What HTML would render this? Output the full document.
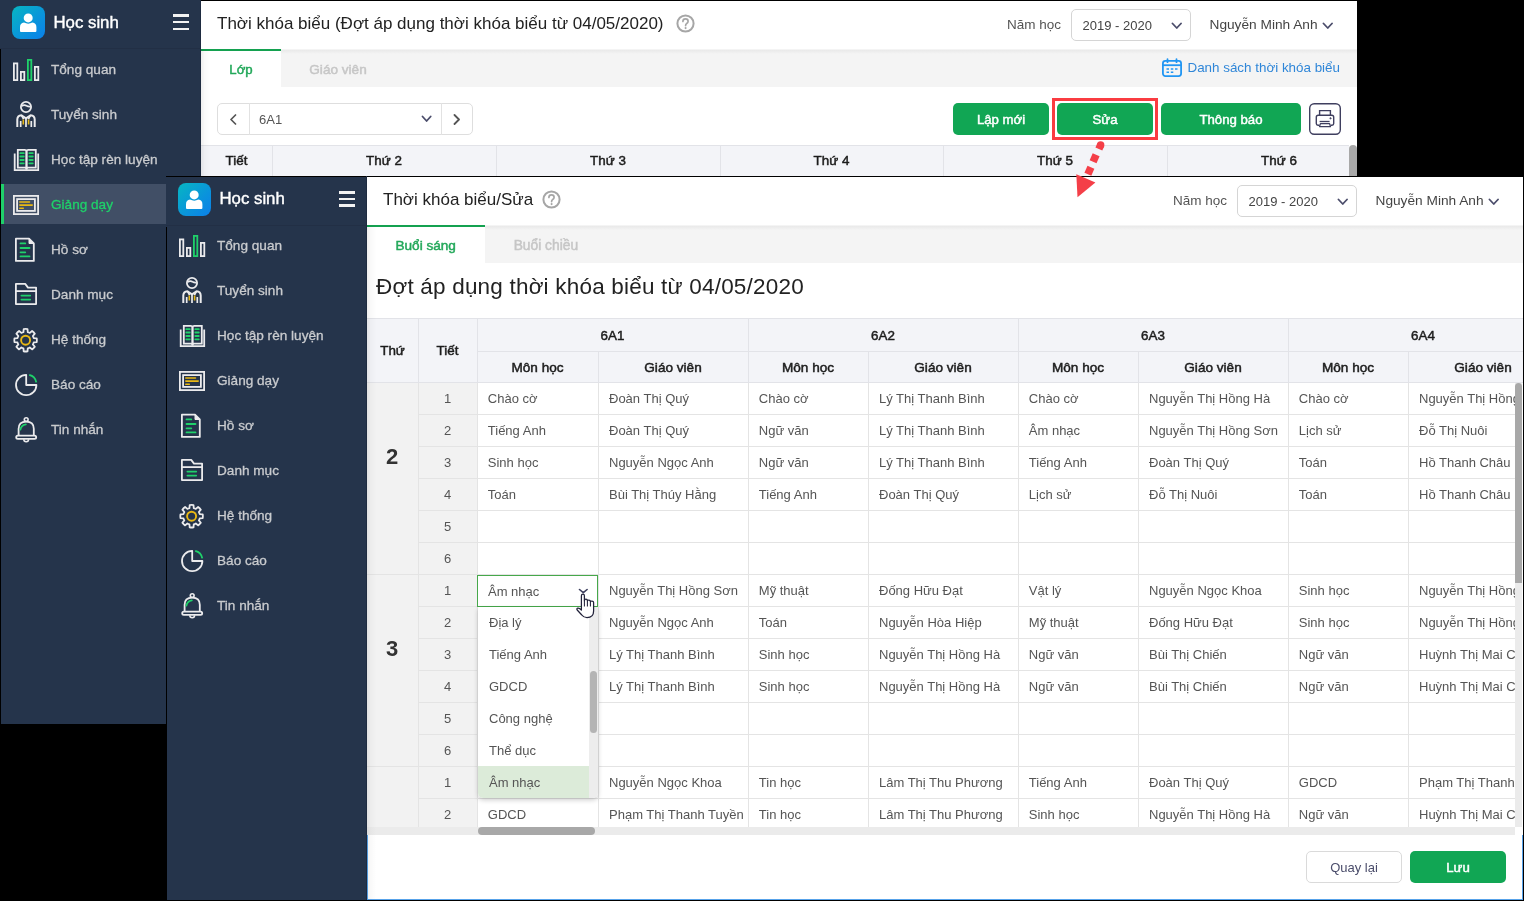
<!DOCTYPE html>
<html><head><meta charset="utf-8"><style>
*{margin:0;padding:0}
html,body{width:1524px;height:901px;overflow:hidden;background:#000;font-family:"Liberation Sans", sans-serif}
.scr{position:absolute;width:1357px;height:724px;overflow:hidden;will-change:transform}
.r{position:absolute}
.t{position:absolute;white-space:nowrap;line-height:1}
</style></head><body>
<div class="scr" style="left:0;top:0"><div class="r" style="left:0px;top:0px;width:201px;height:724px;background:#25344b"></div><div class="r" style="left:0px;top:49px;width:1px;height:675px;background:#000"></div><div class="r" style="left:0px;top:48px;width:201px;height:1px;background:#222f45"></div><div class="r" style="left:12px;top:6px;width:33px;height:33px;border-radius:8px;background:linear-gradient(135deg,#07b6c2 0%,#0a93dc 60%,#0b80ea 100%)"></div><svg class="r" style="left:12px;top:6px" width="33" height="33" viewBox="0 0 33 33"><circle cx="16.2" cy="11.9" r="4.5" fill="#fff"/><path d="M8,25 V21.2 Q8,17.2 12,16.6 Q16.2,18.8 20.4,16.6 Q24.4,17.2 24.4,21.2 V25 Q24.4,26 23.4,26 H9 Q8,26 8,25 Z" fill="#fff"/></svg><div class="t" style="left:53.5px;top:14.78px;font-size:16.8px;color:#fff;font-weight:normal;-webkit-text-stroke:0.4px currentColor">Học sinh</div><div class="r" style="left:173.2px;top:14.3px;width:16px;height:2.6px;background:#f2f2f2"></div><div class="r" style="left:173.2px;top:20.9px;width:16px;height:2.6px;background:#f2f2f2"></div><div class="r" style="left:173.2px;top:27.5px;width:16px;height:2.6px;background:#f2f2f2"></div><svg class="r" style="left:11px;top:55px" width="30" height="30" viewBox="0 0 30 30"><rect x="2.9" y="8.4" width="3.4" height="16.7" fill="none" stroke="#ebebed" stroke-width="1.8"/><rect x="9.9" y="16.9" width="3.4" height="8.2" fill="none" stroke="#ebebed" stroke-width="1.8"/><rect x="16.9" y="4.9" width="3.4" height="20.2" fill="none" stroke="#1fd16a" stroke-width="1.8"/><rect x="23.9" y="11.9" width="3.4" height="13.2" fill="none" stroke="#ebebed" stroke-width="1.8"/></svg><div class="t" style="left:51px;top:62.99px;font-size:13.6px;color:#c9cbce;font-weight:normal;-webkit-text-stroke:0.3px currentColor">Tổng quan</div><svg class="r" style="left:11px;top:100px" width="30" height="30" viewBox="0 0 30 30"><circle cx="15" cy="7" r="5.1" fill="none" stroke="#ebebed" stroke-width="1.8"/><path d="M10.6,6.2 Q13,4.2 15.5,5.8 Q17.5,7 19.6,6.6" fill="none" stroke="#ebebed" stroke-width="1.7"/><path d="M6.3,27 V19.6 Q6.3,15.4 10.4,15.2 L15,18.4 L19.6,15.2 Q23.7,15.4 23.7,19.6 V27" fill="none" stroke="#ebebed" stroke-width="2" stroke-linejoin="round"/><path d="M9.7,21 V27 M20.3,21 V27 M15,18.4 V27 M10.4,15.2 L12.6,19.2 M19.6,15.2 L17.4,19.2" fill="none" stroke="#ebebed" stroke-width="1.7"/><path d="M12.3,19.5 V24.6 M17.6,19.5 V24.6" fill="none" stroke="#e9b815" stroke-width="1.6"/></svg><div class="t" style="left:51px;top:107.99px;font-size:13.6px;color:#c9cbce;font-weight:normal;-webkit-text-stroke:0.3px currentColor">Tuyển sinh</div><svg class="r" style="left:11px;top:145px" width="30" height="30" viewBox="0 0 30 30"><path d="M3.7,8.5 V25.2 H27.2 V8.5" fill="none" stroke="#ebebed" stroke-width="1.8"/><path d="M6.8,4.9 H14 Q15.5,4.9 15.5,6.5 V24.5 Q15.5,22.7 14,22.7 H6.8 Z" fill="none" stroke="#ebebed" stroke-width="1.8"/><path d="M24.8,4.9 H17 Q15.5,4.9 15.5,6.5 V24.5 Q15.5,22.7 17,22.7 H24.8 Z" fill="none" stroke="#ebebed" stroke-width="1.8"/><path d="M9.3,8.2 H12.8 M9.3,11.5 H12.8 M9.3,15 H12.8 M9.3,18.3 H12.8 M18.3,8.2 H21.8 M18.3,11.5 H21.8 M18.3,15 H21.8 M18.3,18.3 H21.8" fill="none" stroke="#1fd16a" stroke-width="1.8" stroke-linecap="round"/></svg><div class="t" style="left:51px;top:152.99px;font-size:13.6px;color:#c9cbce;font-weight:normal;-webkit-text-stroke:0.3px currentColor">Học tập rèn luyện</div><div class="r" style="left:1px;top:184px;width:200px;height:40px;background:#414f66"></div><div class="r" style="left:1px;top:184px;width:3px;height:40px;background:#1fd16a"></div><svg class="r" style="left:11px;top:190px" width="30" height="30" viewBox="0 0 30 30"><rect x="2.9" y="5.9" width="24.2" height="18.2" fill="none" stroke="#ebebed" stroke-width="1.8"/><rect x="6.1" y="9.1" width="17.8" height="11.8" fill="none" stroke="#ebebed" stroke-width="1.8"/><path d="M8.8,12 H18.5 M8.8,15.1 H21.2 M8.8,18.2 H12.3" fill="none" stroke="#e9b815" stroke-width="1.6" stroke-linecap="round"/></svg><div class="t" style="left:51px;top:197.99px;font-size:13.6px;color:#1fd16a;font-weight:normal;-webkit-text-stroke:0.3px currentColor">Giảng dạy</div><svg class="r" style="left:11px;top:235px" width="30" height="30" viewBox="0 0 30 30"><path d="M4.9,3.7 H18 L22.8,8.5 V25.9 H4.9 Z" fill="none" stroke="#ebebed" stroke-width="1.8" stroke-linejoin="round"/><path d="M18,3.7 V8.5 H22.8" fill="#ebebed" stroke="#ebebed" stroke-width="1"/><path d="M9.5,8.4 H14.3 M9.5,13 H18.5 M9.5,17.3 H14.3 M9.5,21.4 H18.5" fill="none" stroke="#1fd16a" stroke-width="1.8" stroke-linecap="round"/></svg><div class="t" style="left:51px;top:242.99px;font-size:13.6px;color:#c9cbce;font-weight:normal;-webkit-text-stroke:0.3px currentColor">Hồ sơ</div><svg class="r" style="left:11px;top:280px" width="30" height="30" viewBox="0 0 30 30"><path d="M4.9,3.9 H14.2 L17,7.6 H25.1 V24.1 H4.9 Z" fill="none" stroke="#ebebed" stroke-width="1.8" stroke-linejoin="round"/><path d="M4.9,11.1 H25.1" fill="none" stroke="#ebebed" stroke-width="1.8"/><path d="M10.4,15.6 H19.2 M10.4,19.6 H19.2" fill="none" stroke="#1fd16a" stroke-width="1.8" stroke-linecap="round"/></svg><div class="t" style="left:51px;top:287.99px;font-size:13.6px;color:#c9cbce;font-weight:normal;-webkit-text-stroke:0.3px currentColor">Danh mục</div><svg class="r" style="left:11px;top:325px" width="30" height="30" viewBox="0 0 30 30"><path d="M12.44,7.08 L12.69,4.06 A11.3,11.3 0 0 1 16.51,4.06 L16.76,7.08 A8.4,8.4 0 0 1 18.81,7.93 L21.12,5.97 A11.3,11.3 0 0 1 23.83,8.68 L21.87,10.99 A8.4,8.4 0 0 1 22.72,13.04 L25.74,13.29 A11.3,11.3 0 0 1 25.74,17.11 L22.72,17.36 A8.4,8.4 0 0 1 21.87,19.41 L23.83,21.72 A11.3,11.3 0 0 1 21.12,24.43 L18.81,22.47 A8.4,8.4 0 0 1 16.76,23.32 L16.51,26.34 A11.3,11.3 0 0 1 12.69,26.34 L12.44,23.32 A8.4,8.4 0 0 1 10.39,22.47 L8.08,24.43 A11.3,11.3 0 0 1 5.37,21.72 L7.33,19.41 A8.4,8.4 0 0 1 6.48,17.36 L3.46,17.11 A11.3,11.3 0 0 1 3.46,13.29 L6.48,13.04 A8.4,8.4 0 0 1 7.33,10.99 L5.37,8.68 A11.3,11.3 0 0 1 8.08,5.97 L10.39,7.93 A8.4,8.4 0 0 1 12.44,7.08 Z" fill="none" stroke="#ebebed" stroke-width="1.8" stroke-linejoin="round"/><circle cx="14.6" cy="15.2" r="4.5" fill="none" stroke="#e9b815" stroke-width="1.9"/></svg><div class="t" style="left:51px;top:332.99px;font-size:13.6px;color:#c9cbce;font-weight:normal;-webkit-text-stroke:0.3px currentColor">Hệ thống</div><svg class="r" style="left:11px;top:370px" width="30" height="30" viewBox="0 0 30 30"><path d="M15.2,4.8 A10.2,10.2 0 1 0 25.4,15 H15.2 Z" fill="none" stroke="#ebebed" stroke-width="1.8" stroke-linejoin="round"/><path d="M18.2,4.9 A9.5,9.5 0 0 1 25.3,12.4" fill="none" stroke="#1fd16a" stroke-width="1.8"/></svg><div class="t" style="left:51px;top:377.99px;font-size:13.6px;color:#c9cbce;font-weight:normal;-webkit-text-stroke:0.3px currentColor">Báo cáo</div><svg class="r" style="left:11px;top:415px" width="30" height="30" viewBox="0 0 30 30"><circle cx="15.2" cy="4.6" r="1.9" fill="none" stroke="#ebebed" stroke-width="1.6"/><path d="M7.6,20.3 V13.8 Q7.6,6.6 15.2,6.6 Q22.8,6.6 22.8,13.8 V20.3" fill="none" stroke="#ebebed" stroke-width="1.8"/><rect x="5.2" y="20.6" width="20" height="3.3" rx="1.6" fill="none" stroke="#ebebed" stroke-width="1.8"/><path d="M12.8,24.3 Q12.8,26.8 15.2,26.8 Q17.6,26.8 17.6,24.3" fill="none" stroke="#ebebed" stroke-width="1.5"/><path d="M9.4,14.6 Q10.2,10.2 14.8,9.3" fill="none" stroke="#1fd16a" stroke-width="1.8" stroke-linecap="round"/></svg><div class="t" style="left:51px;top:422.99px;font-size:13.6px;color:#c9cbce;font-weight:normal;-webkit-text-stroke:0.3px currentColor">Tin nhắn</div><div class="r" style="left:201px;top:0px;width:1156px;height:1px;background:#000"></div><div class="r" style="left:201px;top:1px;width:1156px;height:48px;background:#fff"></div><div class="t" style="left:217px;top:14.61px;font-size:17px;color:#222;font-weight:normal;">Thời khóa biểu (Đợt áp dụng thời khóa biểu từ 04/05/2020)</div><svg class="r" style="left:676px;top:14px" width="19" height="19" viewBox="0 0 19 19"><circle cx="9.5" cy="9.5" r="8.1" fill="none" stroke="#a6a6a6" stroke-width="2"/><path d="M6.9,7.4 Q6.9,4.9 9.5,4.9 Q12.1,4.9 12.1,7.3 Q12.1,8.7 10.7,9.5 Q9.6,10.1 9.6,11.6" fill="none" stroke="#a6a6a6" stroke-width="1.7" stroke-linecap="round"/><circle cx="9.6" cy="14.1" r="1.05" fill="#a6a6a6"/></svg><div class="t" style="left:1007px;top:18.47px;font-size:13.5px;color:#555;font-weight:normal;">Năm học</div><div class="r" style="left:1071px;top:9px;width:120px;height:32px;box-sizing:border-box;border:1px solid #d5d5d5;border-radius:5px;background:#fff"></div><div class="t" style="left:1082.5px;top:18.90px;font-size:13px;color:#444;font-weight:normal;">2019 - 2020</div><svg class="r" style="left:1170.5px;top:21.5px" width="11.5" height="7.5" viewBox="-1 -1 11.5 7.5"><path d="M0.5,0.5 L4.75,5.0 L9.0,0.5" fill="none" stroke="#4b4d6b" stroke-width="1.8" stroke-linecap="round" stroke-linejoin="round"/></svg><div class="t" style="left:1209.5px;top:17.90px;font-size:13.7px;color:#444;font-weight:normal;">Nguyễn Minh Anh</div><svg class="r" style="left:1322px;top:21.5px" width="11.5" height="7.5" viewBox="-1 -1 11.5 7.5"><path d="M0.5,0.5 L4.75,5.0 L9.0,0.5" fill="none" stroke="#4b4d6b" stroke-width="1.8" stroke-linecap="round" stroke-linejoin="round"/></svg><div class="r" style="left:201px;top:49px;width:1156px;height:38px;background:#f4f4f4"></div><div class="r" style="left:201px;top:50px;width:1156px;height:4px;background:linear-gradient(#e9e9e9,#f4f4f4)"></div><div class="r" style="left:201px;top:49px;width:80px;height:38px;background:#fff"></div><div class="r" style="left:201px;top:49px;width:80px;height:2px;background:#14a150"></div><div class="t" style="left:191.00px;width:100px;text-align:center;top:63.33px;font-size:13.2px;color:#23a85a;font-weight:normal;;-webkit-text-stroke:0.46px currentColor">Lớp</div><div class="t" style="left:278.00px;width:120px;text-align:center;top:62.99px;font-size:13.6px;color:#c6c6c6;font-weight:normal;;-webkit-text-stroke:0.48px currentColor">Giáo viên</div><svg class="r" style="left:1161px;top:58px" width="22" height="20" viewBox="0 0 22 20"><rect x="1.9" y="2.9" width="18.2" height="15.2" rx="2.5" fill="none" stroke="#2196f3" stroke-width="1.8"/><path d="M1.9,7.2 H20.1" stroke="#2196f3" stroke-width="1.8"/><path d="M6.5,1.2 V4.2 M15.5,1.2 V4.2" stroke="#2196f3" stroke-width="1.8" stroke-linecap="round"/><path d="M5.5,11 H8 M9.8,11 H12.3 M14,11 H16.5 M5.5,14.2 H8 M9.8,14.2 H12.3" stroke="#2196f3" stroke-width="1.6"/></svg><div class="t" style="left:1187.5px;top:61.36px;font-size:13.4px;color:#2f86d8;font-weight:normal;">Danh sách thời khóa biểu</div><div class="r" style="left:201px;top:87px;width:1156px;height:637px;background:#fff"></div><div class="r" style="left:217px;top:103px;width:256px;height:32px;box-sizing:border-box;border:1px solid #dedede;border-radius:5px;background:#fff"></div><div class="r" style="left:249px;top:103px;width:1px;height:32px;background:#e2e2e2"></div><div class="r" style="left:441px;top:103px;width:1px;height:32px;background:#e2e2e2"></div><div class="t" style="left:259px;top:112.90px;font-size:13px;color:#555;font-weight:normal;">6A1</div><svg class="r" style="left:421.3px;top:115.2px" width="11.2" height="7.5" viewBox="-1 -1 11.2 7.5"><path d="M0.5,0.5 L4.6,5.0 L8.7,0.5" fill="none" stroke="#4b4d6b" stroke-width="1.8" stroke-linecap="round" stroke-linejoin="round"/></svg><svg class="r" style="left:453px;top:114px" width="8" height="11" viewBox="0 0 8 11"><path d="M1.5,1 L6,5.5 L1.5,10" fill="none" stroke="#555" stroke-width="1.8" stroke-linecap="round" stroke-linejoin="round"/></svg><svg class="r" style="left:228.8px;top:114px" width="8" height="11" viewBox="0 0 8 11"><path d="M6.5,1 L2,5.5 L6.5,10" fill="none" stroke="#555" stroke-width="1.7" stroke-linecap="round" stroke-linejoin="round"/></svg><div class="r" style="left:953px;top:103px;width:96px;height:32px;background:#11a654;border-radius:5px"></div><div class="t" style="left:901.00px;width:200px;text-align:center;top:112.83px;font-size:13.2px;color:#fff;font-weight:normal;;-webkit-text-stroke:0.46px currentColor">Lập mới</div><div class="r" style="left:1057px;top:103px;width:96px;height:32px;background:#11a654;border-radius:5px"></div><div class="t" style="left:1005.00px;width:200px;text-align:center;top:112.83px;font-size:13.2px;color:#fff;font-weight:normal;;-webkit-text-stroke:0.46px currentColor">Sửa</div><div class="r" style="left:1161px;top:103px;width:140px;height:32px;background:#11a654;border-radius:5px"></div><div class="t" style="left:1131.00px;width:200px;text-align:center;top:112.83px;font-size:13.2px;color:#fff;font-weight:normal;;-webkit-text-stroke:0.46px currentColor">Thông báo</div><svg class="r" style="left:1309px;top:103px" width="32" height="32" viewBox="0 0 32 32"><rect x="0.7" y="0.7" width="30.6" height="30.6" rx="4.5" fill="#fff" stroke="#3f3f5f" stroke-width="1.4"/><path d="M10.6,12.3 V7.6 H21.4 V12.3" fill="none" stroke="#3f3f5f" stroke-width="1.4"/><path d="M10.3,22.3 H9 Q7.3,22.3 7.3,20.6 V14.2 Q7.3,12.3 9.2,12.3 H22.8 Q24.7,12.3 24.7,14.2 V20.6 Q24.7,22.3 23,22.3 H21.7" fill="none" stroke="#3f3f5f" stroke-width="1.4"/><path d="M10.6,18.5 H20.6" fill="none" stroke="#3f3f5f" stroke-width="1.3"/><path d="M11.4,20.6 H20.6 L21.5,23.6 H10.5 Z" fill="none" stroke="#3f3f5f" stroke-width="1.3" stroke-linejoin="round"/><path d="M21.5,14.4 L22.4,15.3 L21.5,16.2 L20.6,15.3 Z" fill="#3f3f5f" stroke="#3f3f5f" stroke-width="0.6"/></svg><div class="r" style="left:201px;top:145px;width:1148px;height:31px;background:#f3f4f8;border-top:1px solid #e2e3e8;box-sizing:border-box"></div><div class="r" style="left:272px;top:145px;width:1px;height:31px;background:#e2e3e8"></div><div class="r" style="left:496px;top:145px;width:1px;height:31px;background:#e2e3e8"></div><div class="r" style="left:720px;top:145px;width:1px;height:31px;background:#e2e3e8"></div><div class="r" style="left:943px;top:145px;width:1px;height:31px;background:#e2e3e8"></div><div class="r" style="left:1167px;top:145px;width:1px;height:31px;background:#e2e3e8"></div><div class="t" style="left:201.50px;width:70px;text-align:center;top:154.06px;font-size:13.4px;color:#1c1c1c;font-weight:normal;;-webkit-text-stroke:0.47px currentColor">Tiết</div><div class="t" style="left:284.00px;width:200px;text-align:center;top:154.06px;font-size:13.4px;color:#1c1c1c;font-weight:normal;;-webkit-text-stroke:0.47px currentColor">Thứ 2</div><div class="t" style="left:508.00px;width:200px;text-align:center;top:154.06px;font-size:13.4px;color:#1c1c1c;font-weight:normal;;-webkit-text-stroke:0.47px currentColor">Thứ 3</div><div class="t" style="left:731.50px;width:200px;text-align:center;top:154.06px;font-size:13.4px;color:#1c1c1c;font-weight:normal;;-webkit-text-stroke:0.47px currentColor">Thứ 4</div><div class="t" style="left:955.00px;width:200px;text-align:center;top:154.06px;font-size:13.4px;color:#1c1c1c;font-weight:normal;;-webkit-text-stroke:0.47px currentColor">Thứ 5</div><div class="t" style="left:1179.00px;width:200px;text-align:center;top:154.06px;font-size:13.4px;color:#1c1c1c;font-weight:normal;;-webkit-text-stroke:0.47px currentColor">Thứ 6</div><div class="r" style="left:1349px;top:145px;width:8px;height:31px;background:#a8a8a8;border-radius:4px 4px 0 0"></div><div class="r" style="left:200px;top:0px;width:1px;height:724px;background:#1e2b40"></div><div class="r" style="left:201px;top:49px;width:9px;height:675px;background:linear-gradient(to right,rgba(0,0,0,0.07),rgba(0,0,0,0.025) 40%,rgba(0,0,0,0))"></div></div>
<div class="scr" style="left:166px;top:176px"><div class="r" style="left:0px;top:0px;width:201px;height:724px;background:#25344b"></div><div class="r" style="left:0px;top:51px;width:1px;height:675px;background:#000"></div><div class="r" style="left:0px;top:0px;width:201px;height:1px;background:#000"></div><div class="r" style="left:0px;top:49px;width:201px;height:1px;background:#222f45"></div><div class="r" style="left:12px;top:7px;width:33px;height:33px;border-radius:8px;background:linear-gradient(135deg,#07b6c2 0%,#0a93dc 60%,#0b80ea 100%)"></div><svg class="r" style="left:12px;top:7px" width="33" height="33" viewBox="0 0 33 33"><circle cx="16.2" cy="11.9" r="4.5" fill="#fff"/><path d="M8,25 V21.2 Q8,17.2 12,16.6 Q16.2,18.8 20.4,16.6 Q24.4,17.2 24.4,21.2 V25 Q24.4,26 23.4,26 H9 Q8,26 8,25 Z" fill="#fff"/></svg><div class="t" style="left:53.5px;top:14.78px;font-size:16.8px;color:#fff;font-weight:normal;-webkit-text-stroke:0.4px currentColor">Học sinh</div><div class="r" style="left:173.2px;top:15.100000000000001px;width:16px;height:2.6px;background:#f2f2f2"></div><div class="r" style="left:173.2px;top:21.7px;width:16px;height:2.6px;background:#f2f2f2"></div><div class="r" style="left:173.2px;top:28.3px;width:16px;height:2.6px;background:#f2f2f2"></div><svg class="r" style="left:11px;top:55px" width="30" height="30" viewBox="0 0 30 30"><rect x="2.9" y="8.4" width="3.4" height="16.7" fill="none" stroke="#ebebed" stroke-width="1.8"/><rect x="9.9" y="16.9" width="3.4" height="8.2" fill="none" stroke="#ebebed" stroke-width="1.8"/><rect x="16.9" y="4.9" width="3.4" height="20.2" fill="none" stroke="#1fd16a" stroke-width="1.8"/><rect x="23.9" y="11.9" width="3.4" height="13.2" fill="none" stroke="#ebebed" stroke-width="1.8"/></svg><div class="t" style="left:51px;top:62.99px;font-size:13.6px;color:#c9cbce;font-weight:normal;-webkit-text-stroke:0.3px currentColor">Tổng quan</div><svg class="r" style="left:11px;top:100px" width="30" height="30" viewBox="0 0 30 30"><circle cx="15" cy="7" r="5.1" fill="none" stroke="#ebebed" stroke-width="1.8"/><path d="M10.6,6.2 Q13,4.2 15.5,5.8 Q17.5,7 19.6,6.6" fill="none" stroke="#ebebed" stroke-width="1.7"/><path d="M6.3,27 V19.6 Q6.3,15.4 10.4,15.2 L15,18.4 L19.6,15.2 Q23.7,15.4 23.7,19.6 V27" fill="none" stroke="#ebebed" stroke-width="2" stroke-linejoin="round"/><path d="M9.7,21 V27 M20.3,21 V27 M15,18.4 V27 M10.4,15.2 L12.6,19.2 M19.6,15.2 L17.4,19.2" fill="none" stroke="#ebebed" stroke-width="1.7"/><path d="M12.3,19.5 V24.6 M17.6,19.5 V24.6" fill="none" stroke="#e9b815" stroke-width="1.6"/></svg><div class="t" style="left:51px;top:107.99px;font-size:13.6px;color:#c9cbce;font-weight:normal;-webkit-text-stroke:0.3px currentColor">Tuyển sinh</div><svg class="r" style="left:11px;top:145px" width="30" height="30" viewBox="0 0 30 30"><path d="M3.7,8.5 V25.2 H27.2 V8.5" fill="none" stroke="#ebebed" stroke-width="1.8"/><path d="M6.8,4.9 H14 Q15.5,4.9 15.5,6.5 V24.5 Q15.5,22.7 14,22.7 H6.8 Z" fill="none" stroke="#ebebed" stroke-width="1.8"/><path d="M24.8,4.9 H17 Q15.5,4.9 15.5,6.5 V24.5 Q15.5,22.7 17,22.7 H24.8 Z" fill="none" stroke="#ebebed" stroke-width="1.8"/><path d="M9.3,8.2 H12.8 M9.3,11.5 H12.8 M9.3,15 H12.8 M9.3,18.3 H12.8 M18.3,8.2 H21.8 M18.3,11.5 H21.8 M18.3,15 H21.8 M18.3,18.3 H21.8" fill="none" stroke="#1fd16a" stroke-width="1.8" stroke-linecap="round"/></svg><div class="t" style="left:51px;top:152.99px;font-size:13.6px;color:#c9cbce;font-weight:normal;-webkit-text-stroke:0.3px currentColor">Học tập rèn luyện</div><svg class="r" style="left:11px;top:190px" width="30" height="30" viewBox="0 0 30 30"><rect x="2.9" y="5.9" width="24.2" height="18.2" fill="none" stroke="#ebebed" stroke-width="1.8"/><rect x="6.1" y="9.1" width="17.8" height="11.8" fill="none" stroke="#ebebed" stroke-width="1.8"/><path d="M8.8,12 H18.5 M8.8,15.1 H21.2 M8.8,18.2 H12.3" fill="none" stroke="#e9b815" stroke-width="1.6" stroke-linecap="round"/></svg><div class="t" style="left:51px;top:197.99px;font-size:13.6px;color:#c9cbce;font-weight:normal;-webkit-text-stroke:0.3px currentColor">Giảng dạy</div><svg class="r" style="left:11px;top:235px" width="30" height="30" viewBox="0 0 30 30"><path d="M4.9,3.7 H18 L22.8,8.5 V25.9 H4.9 Z" fill="none" stroke="#ebebed" stroke-width="1.8" stroke-linejoin="round"/><path d="M18,3.7 V8.5 H22.8" fill="#ebebed" stroke="#ebebed" stroke-width="1"/><path d="M9.5,8.4 H14.3 M9.5,13 H18.5 M9.5,17.3 H14.3 M9.5,21.4 H18.5" fill="none" stroke="#1fd16a" stroke-width="1.8" stroke-linecap="round"/></svg><div class="t" style="left:51px;top:242.99px;font-size:13.6px;color:#c9cbce;font-weight:normal;-webkit-text-stroke:0.3px currentColor">Hồ sơ</div><svg class="r" style="left:11px;top:280px" width="30" height="30" viewBox="0 0 30 30"><path d="M4.9,3.9 H14.2 L17,7.6 H25.1 V24.1 H4.9 Z" fill="none" stroke="#ebebed" stroke-width="1.8" stroke-linejoin="round"/><path d="M4.9,11.1 H25.1" fill="none" stroke="#ebebed" stroke-width="1.8"/><path d="M10.4,15.6 H19.2 M10.4,19.6 H19.2" fill="none" stroke="#1fd16a" stroke-width="1.8" stroke-linecap="round"/></svg><div class="t" style="left:51px;top:287.99px;font-size:13.6px;color:#c9cbce;font-weight:normal;-webkit-text-stroke:0.3px currentColor">Danh mục</div><svg class="r" style="left:11px;top:325px" width="30" height="30" viewBox="0 0 30 30"><path d="M12.44,7.08 L12.69,4.06 A11.3,11.3 0 0 1 16.51,4.06 L16.76,7.08 A8.4,8.4 0 0 1 18.81,7.93 L21.12,5.97 A11.3,11.3 0 0 1 23.83,8.68 L21.87,10.99 A8.4,8.4 0 0 1 22.72,13.04 L25.74,13.29 A11.3,11.3 0 0 1 25.74,17.11 L22.72,17.36 A8.4,8.4 0 0 1 21.87,19.41 L23.83,21.72 A11.3,11.3 0 0 1 21.12,24.43 L18.81,22.47 A8.4,8.4 0 0 1 16.76,23.32 L16.51,26.34 A11.3,11.3 0 0 1 12.69,26.34 L12.44,23.32 A8.4,8.4 0 0 1 10.39,22.47 L8.08,24.43 A11.3,11.3 0 0 1 5.37,21.72 L7.33,19.41 A8.4,8.4 0 0 1 6.48,17.36 L3.46,17.11 A11.3,11.3 0 0 1 3.46,13.29 L6.48,13.04 A8.4,8.4 0 0 1 7.33,10.99 L5.37,8.68 A11.3,11.3 0 0 1 8.08,5.97 L10.39,7.93 A8.4,8.4 0 0 1 12.44,7.08 Z" fill="none" stroke="#ebebed" stroke-width="1.8" stroke-linejoin="round"/><circle cx="14.6" cy="15.2" r="4.5" fill="none" stroke="#e9b815" stroke-width="1.9"/></svg><div class="t" style="left:51px;top:332.99px;font-size:13.6px;color:#c9cbce;font-weight:normal;-webkit-text-stroke:0.3px currentColor">Hệ thống</div><svg class="r" style="left:11px;top:370px" width="30" height="30" viewBox="0 0 30 30"><path d="M15.2,4.8 A10.2,10.2 0 1 0 25.4,15 H15.2 Z" fill="none" stroke="#ebebed" stroke-width="1.8" stroke-linejoin="round"/><path d="M18.2,4.9 A9.5,9.5 0 0 1 25.3,12.4" fill="none" stroke="#1fd16a" stroke-width="1.8"/></svg><div class="t" style="left:51px;top:377.99px;font-size:13.6px;color:#c9cbce;font-weight:normal;-webkit-text-stroke:0.3px currentColor">Báo cáo</div><svg class="r" style="left:11px;top:415px" width="30" height="30" viewBox="0 0 30 30"><circle cx="15.2" cy="4.6" r="1.9" fill="none" stroke="#ebebed" stroke-width="1.6"/><path d="M7.6,20.3 V13.8 Q7.6,6.6 15.2,6.6 Q22.8,6.6 22.8,13.8 V20.3" fill="none" stroke="#ebebed" stroke-width="1.8"/><rect x="5.2" y="20.6" width="20" height="3.3" rx="1.6" fill="none" stroke="#ebebed" stroke-width="1.8"/><path d="M12.8,24.3 Q12.8,26.8 15.2,26.8 Q17.6,26.8 17.6,24.3" fill="none" stroke="#ebebed" stroke-width="1.5"/><path d="M9.4,14.6 Q10.2,10.2 14.8,9.3" fill="none" stroke="#1fd16a" stroke-width="1.8" stroke-linecap="round"/></svg><div class="t" style="left:51px;top:422.99px;font-size:13.6px;color:#c9cbce;font-weight:normal;-webkit-text-stroke:0.3px currentColor">Tin nhắn</div><div class="r" style="left:201px;top:0px;width:1156px;height:1px;background:#000"></div><div class="r" style="left:201px;top:1px;width:1156px;height:48px;background:#fff"></div><div class="t" style="left:217px;top:14.61px;font-size:17px;color:#222;font-weight:normal;">Thời khóa biểu/Sửa</div><svg class="r" style="left:375.5px;top:14px" width="19" height="19" viewBox="0 0 19 19"><circle cx="9.5" cy="9.5" r="8.1" fill="none" stroke="#a6a6a6" stroke-width="2"/><path d="M6.9,7.4 Q6.9,4.9 9.5,4.9 Q12.1,4.9 12.1,7.3 Q12.1,8.7 10.7,9.5 Q9.6,10.1 9.6,11.6" fill="none" stroke="#a6a6a6" stroke-width="1.7" stroke-linecap="round"/><circle cx="9.6" cy="14.1" r="1.05" fill="#a6a6a6"/></svg><div class="t" style="left:1007px;top:18.47px;font-size:13.5px;color:#555;font-weight:normal;">Năm học</div><div class="r" style="left:1071px;top:9px;width:120px;height:32px;box-sizing:border-box;border:1px solid #d5d5d5;border-radius:5px;background:#fff"></div><div class="t" style="left:1082.5px;top:18.90px;font-size:13px;color:#444;font-weight:normal;">2019 - 2020</div><svg class="r" style="left:1170.5px;top:21.5px" width="11.5" height="7.5" viewBox="-1 -1 11.5 7.5"><path d="M0.5,0.5 L4.75,5.0 L9.0,0.5" fill="none" stroke="#4b4d6b" stroke-width="1.8" stroke-linecap="round" stroke-linejoin="round"/></svg><div class="t" style="left:1209.5px;top:17.90px;font-size:13.7px;color:#444;font-weight:normal;">Nguyễn Minh Anh</div><svg class="r" style="left:1322px;top:21.5px" width="11.5" height="7.5" viewBox="-1 -1 11.5 7.5"><path d="M0.5,0.5 L4.75,5.0 L9.0,0.5" fill="none" stroke="#4b4d6b" stroke-width="1.8" stroke-linecap="round" stroke-linejoin="round"/></svg><div class="r" style="left:201px;top:49px;width:1156px;height:38px;background:#f4f4f4"></div><div class="r" style="left:201px;top:50px;width:1156px;height:4px;background:linear-gradient(#e9e9e9,#f4f4f4)"></div><div class="r" style="left:201px;top:49px;width:118px;height:38px;background:#fff"></div><div class="r" style="left:201px;top:49px;width:118px;height:2px;background:#14a150"></div><div class="t" style="left:189.70px;width:140px;text-align:center;top:62.99px;font-size:13.6px;color:#23a85a;font-weight:normal;;-webkit-text-stroke:0.48px currentColor">Buổi sáng</div><div class="t" style="left:309.90px;width:140px;text-align:center;top:62.82px;font-size:13.8px;color:#c6c6c6;font-weight:normal;;-webkit-text-stroke:0.48px currentColor">Buổi chiều</div><div class="r" style="left:201px;top:87px;width:1156px;height:637px;background:#fff"></div><div class="t" style="left:210px;top:99.65px;font-size:22.5px;color:#222;font-weight:normal;letter-spacing:0.2px">Đợt áp dụng thời khóa biểu từ 04/05/2020</div><div class="r" style="left:201px;top:142px;width:1156px;height:517px;background:#fff"></div><div class="r" style="left:201px;top:142px;width:1156px;height:64px;background:#f3f4f8"></div><div class="r" style="left:201px;top:207px;width:110px;height:444px;background:#f2f2f2"></div><div class="r" style="left:201px;top:142px;width:1156px;height:1px;background:#e2e3e8"></div><div class="r" style="left:311px;top:175px;width:1046px;height:1px;background:#e2e3e8"></div><div class="r" style="left:201px;top:206px;width:1156px;height:1px;background:#e2e3e8"></div><div class="r" style="left:252px;top:142px;width:1px;height:64px;background:#e2e3e8"></div><div class="r" style="left:311px;top:142px;width:1px;height:64px;background:#e2e3e8"></div><div class="r" style="left:582px;top:142px;width:1px;height:64px;background:#e2e3e8"></div><div class="r" style="left:852px;top:142px;width:1px;height:64px;background:#e2e3e8"></div><div class="r" style="left:1122px;top:142px;width:1px;height:64px;background:#e2e3e8"></div><div class="r" style="left:432px;top:175px;width:1px;height:31px;background:#e2e3e8"></div><div class="r" style="left:702px;top:175px;width:1px;height:31px;background:#e2e3e8"></div><div class="r" style="left:972px;top:175px;width:1px;height:31px;background:#e2e3e8"></div><div class="r" style="left:1242px;top:175px;width:1px;height:31px;background:#e2e3e8"></div><div class="t" style="left:201.50px;width:50px;text-align:center;top:168.06px;font-size:13.4px;color:#1c1c1c;font-weight:normal;;-webkit-text-stroke:0.47px currentColor">Thứ</div><div class="t" style="left:252.50px;width:58px;text-align:center;top:168.06px;font-size:13.4px;color:#1c1c1c;font-weight:normal;;-webkit-text-stroke:0.47px currentColor">Tiết</div><div class="t" style="left:346.50px;width:200px;text-align:center;top:153.06px;font-size:13.4px;color:#1c1c1c;font-weight:normal;;-webkit-text-stroke:0.47px currentColor">6A1</div><div class="t" style="left:617.00px;width:200px;text-align:center;top:153.06px;font-size:13.4px;color:#1c1c1c;font-weight:normal;;-webkit-text-stroke:0.47px currentColor">6A2</div><div class="t" style="left:887.00px;width:200px;text-align:center;top:153.06px;font-size:13.4px;color:#1c1c1c;font-weight:normal;;-webkit-text-stroke:0.47px currentColor">6A3</div><div class="t" style="left:1157.00px;width:200px;text-align:center;top:153.06px;font-size:13.4px;color:#1c1c1c;font-weight:normal;;-webkit-text-stroke:0.47px currentColor">6A4</div><div class="t" style="left:271.50px;width:200px;text-align:center;top:184.89px;font-size:13.6px;color:#1c1c1c;font-weight:normal;;-webkit-text-stroke:0.48px currentColor">Môn học</div><div class="t" style="left:407.00px;width:200px;text-align:center;top:184.89px;font-size:13.6px;color:#1c1c1c;font-weight:normal;;-webkit-text-stroke:0.48px currentColor">Giáo viên</div><div class="t" style="left:542.00px;width:200px;text-align:center;top:184.89px;font-size:13.6px;color:#1c1c1c;font-weight:normal;;-webkit-text-stroke:0.48px currentColor">Môn học</div><div class="t" style="left:677.00px;width:200px;text-align:center;top:184.89px;font-size:13.6px;color:#1c1c1c;font-weight:normal;;-webkit-text-stroke:0.48px currentColor">Giáo viên</div><div class="t" style="left:812.00px;width:200px;text-align:center;top:184.89px;font-size:13.6px;color:#1c1c1c;font-weight:normal;;-webkit-text-stroke:0.48px currentColor">Môn học</div><div class="t" style="left:947.00px;width:200px;text-align:center;top:184.89px;font-size:13.6px;color:#1c1c1c;font-weight:normal;;-webkit-text-stroke:0.48px currentColor">Giáo viên</div><div class="t" style="left:1082.00px;width:200px;text-align:center;top:184.89px;font-size:13.6px;color:#1c1c1c;font-weight:normal;;-webkit-text-stroke:0.48px currentColor">Môn học</div><div class="t" style="left:1217.00px;width:200px;text-align:center;top:184.89px;font-size:13.6px;color:#1c1c1c;font-weight:normal;;-webkit-text-stroke:0.48px currentColor">Giáo viên</div><div class="r" style="left:252px;top:238px;width:1098px;height:1px;background:#e4e4e4"></div><div class="r" style="left:252px;top:270px;width:1098px;height:1px;background:#e4e4e4"></div><div class="r" style="left:252px;top:302px;width:1098px;height:1px;background:#e4e4e4"></div><div class="r" style="left:252px;top:334px;width:1098px;height:1px;background:#e4e4e4"></div><div class="r" style="left:252px;top:366px;width:1098px;height:1px;background:#e4e4e4"></div><div class="r" style="left:252px;top:398px;width:1098px;height:1px;background:#e4e4e4"></div><div class="r" style="left:252px;top:430px;width:1098px;height:1px;background:#e4e4e4"></div><div class="r" style="left:252px;top:462px;width:1098px;height:1px;background:#e4e4e4"></div><div class="r" style="left:252px;top:494px;width:1098px;height:1px;background:#e4e4e4"></div><div class="r" style="left:252px;top:526px;width:1098px;height:1px;background:#e4e4e4"></div><div class="r" style="left:252px;top:558px;width:1098px;height:1px;background:#e4e4e4"></div><div class="r" style="left:252px;top:590px;width:1098px;height:1px;background:#e4e4e4"></div><div class="r" style="left:252px;top:622px;width:1098px;height:1px;background:#e4e4e4"></div><div class="r" style="left:201px;top:398px;width:51px;height:1px;background:#e4e4e4"></div><div class="r" style="left:201px;top:590px;width:51px;height:1px;background:#e4e4e4"></div><div class="r" style="left:252px;top:207px;width:1px;height:444px;background:#e4e4e4"></div><div class="r" style="left:311px;top:207px;width:1px;height:444px;background:#e4e4e4"></div><div class="r" style="left:432px;top:207px;width:1px;height:444px;background:#e4e4e4"></div><div class="r" style="left:582px;top:207px;width:1px;height:444px;background:#e4e4e4"></div><div class="r" style="left:702px;top:207px;width:1px;height:444px;background:#e4e4e4"></div><div class="r" style="left:852px;top:207px;width:1px;height:444px;background:#e4e4e4"></div><div class="r" style="left:972px;top:207px;width:1px;height:444px;background:#e4e4e4"></div><div class="r" style="left:1122px;top:207px;width:1px;height:444px;background:#e4e4e4"></div><div class="r" style="left:1242px;top:207px;width:1px;height:444px;background:#e4e4e4"></div><div class="t" style="left:206.00px;width:40px;text-align:center;top:270.18px;font-size:22px;color:#333;font-weight:bold;">2</div><div class="t" style="left:206.00px;width:40px;text-align:center;top:462.18px;font-size:22px;color:#333;font-weight:bold;">3</div><div class="t" style="left:261.50px;width:40px;text-align:center;top:216.30px;font-size:13px;color:#555;font-weight:normal;">1</div><div class="t" style="left:261.50px;width:40px;text-align:center;top:248.30px;font-size:13px;color:#555;font-weight:normal;">2</div><div class="t" style="left:261.50px;width:40px;text-align:center;top:280.30px;font-size:13px;color:#555;font-weight:normal;">3</div><div class="t" style="left:261.50px;width:40px;text-align:center;top:312.30px;font-size:13px;color:#555;font-weight:normal;">4</div><div class="t" style="left:261.50px;width:40px;text-align:center;top:344.30px;font-size:13px;color:#555;font-weight:normal;">5</div><div class="t" style="left:261.50px;width:40px;text-align:center;top:376.30px;font-size:13px;color:#555;font-weight:normal;">6</div><div class="t" style="left:261.50px;width:40px;text-align:center;top:408.30px;font-size:13px;color:#555;font-weight:normal;">1</div><div class="t" style="left:261.50px;width:40px;text-align:center;top:440.30px;font-size:13px;color:#555;font-weight:normal;">2</div><div class="t" style="left:261.50px;width:40px;text-align:center;top:472.30px;font-size:13px;color:#555;font-weight:normal;">3</div><div class="t" style="left:261.50px;width:40px;text-align:center;top:504.30px;font-size:13px;color:#555;font-weight:normal;">4</div><div class="t" style="left:261.50px;width:40px;text-align:center;top:536.30px;font-size:13px;color:#555;font-weight:normal;">5</div><div class="t" style="left:261.50px;width:40px;text-align:center;top:568.30px;font-size:13px;color:#555;font-weight:normal;">6</div><div class="t" style="left:261.50px;width:40px;text-align:center;top:600.30px;font-size:13px;color:#555;font-weight:normal;">1</div><div class="t" style="left:261.50px;width:40px;text-align:center;top:632.30px;font-size:13px;color:#555;font-weight:normal;">2</div><div class="r" style="left:0;top:0;width:1349px;height:724px;overflow:hidden"><div class="t" style="left:321.8px;top:216.40px;font-size:13px;color:#555;font-weight:normal;">Chào cờ</div><div class="t" style="left:443px;top:216.40px;font-size:13px;color:#555;font-weight:normal;">Đoàn Thị Quý</div><div class="t" style="left:592.8px;top:216.40px;font-size:13px;color:#555;font-weight:normal;">Chào cờ</div><div class="t" style="left:713px;top:216.40px;font-size:13px;color:#555;font-weight:normal;">Lý Thị Thanh Bình</div><div class="t" style="left:862.8px;top:216.40px;font-size:13px;color:#555;font-weight:normal;">Chào cờ</div><div class="t" style="left:983px;top:216.40px;font-size:13px;color:#555;font-weight:normal;">Nguyễn Thị Hồng Hà</div><div class="t" style="left:1132.8px;top:216.40px;font-size:13px;color:#555;font-weight:normal;">Chào cờ</div><div class="t" style="left:1253px;top:216.40px;font-size:13px;color:#555;font-weight:normal;">Nguyễn Thị Hồng Hà</div><div class="t" style="left:321.8px;top:248.40px;font-size:13px;color:#555;font-weight:normal;">Tiếng Anh</div><div class="t" style="left:443px;top:248.40px;font-size:13px;color:#555;font-weight:normal;">Đoàn Thị Quý</div><div class="t" style="left:592.8px;top:248.40px;font-size:13px;color:#555;font-weight:normal;">Ngữ văn</div><div class="t" style="left:713px;top:248.40px;font-size:13px;color:#555;font-weight:normal;">Lý Thị Thanh Bình</div><div class="t" style="left:862.8px;top:248.40px;font-size:13px;color:#555;font-weight:normal;">Âm nhạc</div><div class="t" style="left:983px;top:248.40px;font-size:13px;color:#555;font-weight:normal;">Nguyễn Thị Hồng Sơn</div><div class="t" style="left:1132.8px;top:248.40px;font-size:13px;color:#555;font-weight:normal;">Lịch sử</div><div class="t" style="left:1253px;top:248.40px;font-size:13px;color:#555;font-weight:normal;">Đỗ Thị Nuôi</div><div class="t" style="left:321.8px;top:280.40px;font-size:13px;color:#555;font-weight:normal;">Sinh học</div><div class="t" style="left:443px;top:280.40px;font-size:13px;color:#555;font-weight:normal;">Nguyễn Ngọc Anh</div><div class="t" style="left:592.8px;top:280.40px;font-size:13px;color:#555;font-weight:normal;">Ngữ văn</div><div class="t" style="left:713px;top:280.40px;font-size:13px;color:#555;font-weight:normal;">Lý Thị Thanh Bình</div><div class="t" style="left:862.8px;top:280.40px;font-size:13px;color:#555;font-weight:normal;">Tiếng Anh</div><div class="t" style="left:983px;top:280.40px;font-size:13px;color:#555;font-weight:normal;">Đoàn Thị Quý</div><div class="t" style="left:1132.8px;top:280.40px;font-size:13px;color:#555;font-weight:normal;">Toán</div><div class="t" style="left:1253px;top:280.40px;font-size:13px;color:#555;font-weight:normal;">Hồ Thanh Châu</div><div class="t" style="left:321.8px;top:312.40px;font-size:13px;color:#555;font-weight:normal;">Toán</div><div class="t" style="left:443px;top:312.40px;font-size:13px;color:#555;font-weight:normal;">Bùi Thị Thúy Hằng</div><div class="t" style="left:592.8px;top:312.40px;font-size:13px;color:#555;font-weight:normal;">Tiếng Anh</div><div class="t" style="left:713px;top:312.40px;font-size:13px;color:#555;font-weight:normal;">Đoàn Thị Quý</div><div class="t" style="left:862.8px;top:312.40px;font-size:13px;color:#555;font-weight:normal;">Lịch sử</div><div class="t" style="left:983px;top:312.40px;font-size:13px;color:#555;font-weight:normal;">Đỗ Thị Nuôi</div><div class="t" style="left:1132.8px;top:312.40px;font-size:13px;color:#555;font-weight:normal;">Toán</div><div class="t" style="left:1253px;top:312.40px;font-size:13px;color:#555;font-weight:normal;">Hồ Thanh Châu</div><div class="t" style="left:443px;top:408.40px;font-size:13px;color:#555;font-weight:normal;">Nguyễn Thị Hồng Sơn</div><div class="t" style="left:592.8px;top:408.40px;font-size:13px;color:#555;font-weight:normal;">Mỹ thuật</div><div class="t" style="left:713px;top:408.40px;font-size:13px;color:#555;font-weight:normal;">Đống Hữu Đạt</div><div class="t" style="left:862.8px;top:408.40px;font-size:13px;color:#555;font-weight:normal;">Vật lý</div><div class="t" style="left:983px;top:408.40px;font-size:13px;color:#555;font-weight:normal;">Nguyễn Ngọc Khoa</div><div class="t" style="left:1132.8px;top:408.40px;font-size:13px;color:#555;font-weight:normal;">Sinh học</div><div class="t" style="left:1253px;top:408.40px;font-size:13px;color:#555;font-weight:normal;">Nguyễn Thị Hồng Hà</div><div class="t" style="left:443px;top:440.40px;font-size:13px;color:#555;font-weight:normal;">Nguyễn Ngọc Anh</div><div class="t" style="left:592.8px;top:440.40px;font-size:13px;color:#555;font-weight:normal;">Toán</div><div class="t" style="left:713px;top:440.40px;font-size:13px;color:#555;font-weight:normal;">Nguyễn Hòa Hiệp</div><div class="t" style="left:862.8px;top:440.40px;font-size:13px;color:#555;font-weight:normal;">Mỹ thuật</div><div class="t" style="left:983px;top:440.40px;font-size:13px;color:#555;font-weight:normal;">Đống Hữu Đạt</div><div class="t" style="left:1132.8px;top:440.40px;font-size:13px;color:#555;font-weight:normal;">Sinh học</div><div class="t" style="left:1253px;top:440.40px;font-size:13px;color:#555;font-weight:normal;">Nguyễn Thị Hồng Hà</div><div class="t" style="left:443px;top:472.40px;font-size:13px;color:#555;font-weight:normal;">Lý Thị Thanh Bình</div><div class="t" style="left:592.8px;top:472.40px;font-size:13px;color:#555;font-weight:normal;">Sinh học</div><div class="t" style="left:713px;top:472.40px;font-size:13px;color:#555;font-weight:normal;">Nguyễn Thị Hồng Hà</div><div class="t" style="left:862.8px;top:472.40px;font-size:13px;color:#555;font-weight:normal;">Ngữ văn</div><div class="t" style="left:983px;top:472.40px;font-size:13px;color:#555;font-weight:normal;">Bùi Thị Chiến</div><div class="t" style="left:1132.8px;top:472.40px;font-size:13px;color:#555;font-weight:normal;">Ngữ văn</div><div class="t" style="left:1253px;top:472.40px;font-size:13px;color:#555;font-weight:normal;">Huỳnh Thị Mai Chi</div><div class="t" style="left:443px;top:504.40px;font-size:13px;color:#555;font-weight:normal;">Lý Thị Thanh Bình</div><div class="t" style="left:592.8px;top:504.40px;font-size:13px;color:#555;font-weight:normal;">Sinh học</div><div class="t" style="left:713px;top:504.40px;font-size:13px;color:#555;font-weight:normal;">Nguyễn Thị Hồng Hà</div><div class="t" style="left:862.8px;top:504.40px;font-size:13px;color:#555;font-weight:normal;">Ngữ văn</div><div class="t" style="left:983px;top:504.40px;font-size:13px;color:#555;font-weight:normal;">Bùi Thị Chiến</div><div class="t" style="left:1132.8px;top:504.40px;font-size:13px;color:#555;font-weight:normal;">Ngữ văn</div><div class="t" style="left:1253px;top:504.40px;font-size:13px;color:#555;font-weight:normal;">Huỳnh Thị Mai Chi</div><div class="t" style="left:443px;top:600.40px;font-size:13px;color:#555;font-weight:normal;">Nguyễn Ngọc Khoa</div><div class="t" style="left:592.8px;top:600.40px;font-size:13px;color:#555;font-weight:normal;">Tin học</div><div class="t" style="left:713px;top:600.40px;font-size:13px;color:#555;font-weight:normal;">Lâm Thị Thu Phương</div><div class="t" style="left:862.8px;top:600.40px;font-size:13px;color:#555;font-weight:normal;">Tiếng Anh</div><div class="t" style="left:983px;top:600.40px;font-size:13px;color:#555;font-weight:normal;">Đoàn Thị Quý</div><div class="t" style="left:1132.8px;top:600.40px;font-size:13px;color:#555;font-weight:normal;">GDCD</div><div class="t" style="left:1253px;top:600.40px;font-size:13px;color:#555;font-weight:normal;">Phạm Thị Thanh Tuyền</div><div class="t" style="left:321.8px;top:632.40px;font-size:13px;color:#555;font-weight:normal;">GDCD</div><div class="t" style="left:443px;top:632.40px;font-size:13px;color:#555;font-weight:normal;">Phạm Thị Thanh Tuyền</div><div class="t" style="left:592.8px;top:632.40px;font-size:13px;color:#555;font-weight:normal;">Tin học</div><div class="t" style="left:713px;top:632.40px;font-size:13px;color:#555;font-weight:normal;">Lâm Thị Thu Phương</div><div class="t" style="left:862.8px;top:632.40px;font-size:13px;color:#555;font-weight:normal;">Sinh học</div><div class="t" style="left:983px;top:632.40px;font-size:13px;color:#555;font-weight:normal;">Nguyễn Thị Hồng Hà</div><div class="t" style="left:1132.8px;top:632.40px;font-size:13px;color:#555;font-weight:normal;">Ngữ văn</div><div class="t" style="left:1253px;top:632.40px;font-size:13px;color:#555;font-weight:normal;">Huỳnh Thị Mai Chi</div></div><div class="r" style="left:1349px;top:207px;width:7px;height:444px;background:#ebebeb"></div><div class="r" style="left:1349px;top:207px;width:7px;height:200px;background:#a8a8a8;border-radius:4px 4px 0 0"></div><div class="r" style="left:201px;top:651px;width:1148px;height:8px;background:#ebebeb"></div><div class="r" style="left:312px;top:651px;width:117px;height:8px;background:#a8a8a8;border-radius:4px"></div><div class="r" style="left:311px;top:399px;width:121px;height:32px;box-sizing:border-box;border:1px solid #46a84a;background:#fff"></div><div class="t" style="left:322px;top:408.80px;font-size:13px;color:#555;font-weight:normal;">Âm nhạc</div><svg class="r" style="left:411.6px;top:411.6px" width="10.6" height="6.2" viewBox="-1 -1 10.6 6.2"><path d="M0.5,0.5 L4.3,3.7 L8.1,0.5" fill="none" stroke="#3d3f5e" stroke-width="1.6" stroke-linecap="round" stroke-linejoin="round"/></svg><div class="r" style="left:312px;top:431px;width:120px;height:191px;background:#fff;box-shadow:0 2px 5px rgba(0,0,0,0.2);border-radius:0 0 5px 5px;overflow:hidden"></div><div class="r" style="left:312px;top:590px;width:111px;height:32px;background:#dcebd9;border-radius:0 0 0 5px"></div><div class="t" style="left:323px;top:440.30px;font-size:13px;color:#555;font-weight:normal;">Địa lý</div><div class="t" style="left:323px;top:472.30px;font-size:13px;color:#555;font-weight:normal;">Tiếng Anh</div><div class="t" style="left:323px;top:504.30px;font-size:13px;color:#555;font-weight:normal;">GDCD</div><div class="t" style="left:323px;top:536.30px;font-size:13px;color:#555;font-weight:normal;">Công nghệ</div><div class="t" style="left:323px;top:568.30px;font-size:13px;color:#555;font-weight:normal;">Thể dục</div><div class="t" style="left:323px;top:600.30px;font-size:13px;color:#555;font-weight:normal;">Âm nhạc</div><div class="r" style="left:423px;top:431px;width:9px;height:191px;background:#ededed;border-radius:0 0 5px 0"></div><div class="r" style="left:424px;top:495px;width:7px;height:62px;background:#b4b4b4;border-radius:3.5px"></div><svg class="r" style="left:409px;top:416px" width="24" height="28" viewBox="0 0 24 28"><path d="M6.4,16.8 V3.8 Q6.4,2.2 7.9,2.2 Q9.4,2.2 9.4,3.8 V8.7 Q9.4,7.2 10.9,7.2 Q12.4,7.2 12.4,8.8 Q12.4,8 13.9,8 Q15.4,8 15.4,9.6 Q15.4,9 17,9 Q18.6,9 18.6,10.6 V19 Q18.6,25.6 12,25.6 Q8.6,25.6 6.8,23 L2.2,18 Q1.3,16.6 2.7,16.2 Q4.3,15.8 6.4,18 Z" fill="#fff" stroke="#22223a" stroke-width="1.25" stroke-linejoin="round"/><path d="M9.4,8.7 V14.5 M12.4,8.8 V14.5 M15.4,9.6 V14.5" fill="none" stroke="#22223a" stroke-width="1.05"/></svg><div class="r" style="left:201px;top:659px;width:1156px;height:65px;background:#fff"></div><div class="r" style="left:201px;top:659px;width:1px;height:65px;background:#58a3ea"></div><div class="r" style="left:201px;top:723px;width:1156px;height:1px;background:#58a3ea"></div><div class="r" style="left:1356px;top:659px;width:1px;height:65px;background:#58a3ea"></div><div class="r" style="left:1140px;top:675px;width:96px;height:32px;box-sizing:border-box;border:1px solid #dadada;border-radius:5px;background:#fff"></div><div class="t" style="left:1138.00px;width:100px;text-align:center;top:685.00px;font-size:13px;color:#4b4d6b;font-weight:normal;">Quay lại</div><div class="r" style="left:1244px;top:675px;width:96px;height:32px;background:#11a654;border-radius:5px"></div><div class="t" style="left:1242.00px;width:100px;text-align:center;top:684.83px;font-size:13.2px;color:#fff;font-weight:normal;;-webkit-text-stroke:0.46px currentColor">Lưu</div><div class="r" style="left:200px;top:0px;width:1px;height:724px;background:#1e2b40"></div><div class="r" style="left:201px;top:49px;width:9px;height:675px;background:linear-gradient(to right,rgba(0,0,0,0.07),rgba(0,0,0,0.025) 40%,rgba(0,0,0,0))"></div></div>
<div class="r" style="left:1052px;top:98px;width:106px;height:42px;box-sizing:border-box;border:3px solid #fa3c41"></div><svg class="r" style="left:1060px;top:135px" width="60" height="70" viewBox="0 0 60 70"><circle cx="40.64" cy="9.95" r="3.75" fill="#f43f48"/><path d="M44.08,11.45 L42.31,15.48 L35.44,12.48 L37.20,8.45 Z" fill="#f43f48"/><path d="M39.56,21.32 L36.52,28.28 L29.64,25.28 L32.69,18.32 Z" fill="#f43f48"/><path d="M34.35,33.72 L31.31,40.68 L24.45,37.68 L27.48,30.72 Z" fill="#f43f48"/><path d="M16.3,39.2 L35.4,47.4 L17.5,62.2 Z" fill="#f43f48"/></svg>
</body></html>
